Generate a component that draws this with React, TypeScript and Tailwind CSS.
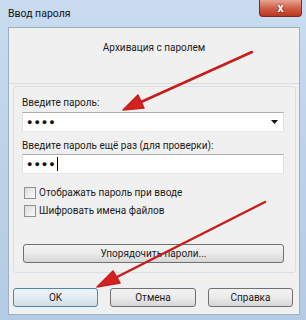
export default function App() {
  return (
    <div className="relative w-[306px] h-[320px] overflow-hidden flex flex-col bg-gradient-to-b from-[#c9dcef] via-[#bcd2ea] to-[#b4cbe5] font-['Roboto',sans-serif] text-[10px] leading-[16px] text-[#1b1b1b]">
      {/* Title bar */}
      <div className="h-[27px] flex items-start justify-between pl-[8px] pr-[4px] shrink-0">
        <span className="pt-[6px] text-[10.5px] text-[#111]">Ввод пароля</span>
        <div className="w-[43px] h-[17px] rounded-b-[4px] border border-t-0 border-[#7a2a20] bg-gradient-to-b from-[#e8a493] via-[#d0604a] to-[#b8371f] flex items-center justify-center">
          <span className="text-white font-bold text-[12px] leading-none [text-shadow:0_0_2px_#5a1208]">x</span>
        </div>
      </div>

      {/* Client area */}
      <div className="ml-[8px] mr-[6px] h-[288px] bg-[#f0f0f0] border border-[#9fb0c4] flex flex-col shrink-0">
        {/* Header */}
        <div className="h-[56px] pt-[12px] text-center border-b border-[#dcdcdc]">
          Архивация с паролем
        </div>

        {/* Group */}
        <div className="mt-[2px] ml-[4px] mr-[3px] h-[187px] border border-[#d5dfe5] rounded-[3px] pl-[8px] pr-[11px] pt-[8px] flex flex-col">
          <div>Введите пароль:</div>
          <div className="mt-[1px] h-[20px] bg-white border border-[#abadb3] border-l-[#e2e3ea] border-r-[#dbdfe6] border-b-[#e3e9ef] flex items-center justify-between pl-[4px] pr-[5px]">
            <span className="text-[9px] tracking-[2px] text-[#111]">●●●●</span>
            <svg width="7" height="4" viewBox="0 0 7 4">
              <path d="M0 0 H7 L3.5 4 Z" fill="#111" />
            </svg>
          </div>

          <div className="mt-[6px]">Введите пароль ещё раз (для проверки):</div>
          <div className="h-[20px] bg-white border border-[#abadb3] border-l-[#e2e3ea] border-r-[#dbdfe6] border-b-[#e3e9ef] flex items-center pl-[4px]">
            <span className="text-[9px] tracking-[2px] text-[#111]">●●●●</span>
            <span className="w-px h-[14px] bg-black" />
          </div>

          <label className="mt-[11px] h-[16px] flex items-center gap-[3px] ml-[2px]">
            <span className="w-[12px] h-[12px] border border-[#8e8f8f] bg-gradient-to-br from-[#dcdcdc] to-[#fbfbfb]" />
            <span>Отображать пароль при вводе</span>
          </label>
          <label className="mt-[2px] h-[16px] flex items-center gap-[3px] ml-[2px]">
            <span className="w-[12px] h-[12px] border border-[#8e8f8f] bg-gradient-to-br from-[#dcdcdc] to-[#fbfbfb]" />
            <span>Шифровать имена файлов</span>
          </label>

          <button className="mt-[25px] ml-[1px] h-[19px] rounded-[3px] border border-[#707070] bg-gradient-to-b from-[#f2f2f2] via-[#ebebeb] to-[#d6d6d6] flex items-center justify-center">
            Упорядочить пароли...
          </button>
        </div>

        {/* Buttons */}
        <div className="mt-[15px] pl-[4px] flex gap-[12px]">
          <button className="w-[85px] h-[19px] rounded-[3px] border border-[#4a86b4] bg-gradient-to-b from-[#eef4f8] via-[#e3ecf2] to-[#cfdce6] flex items-center justify-center">
            OK
          </button>
          <button className="w-[86px] h-[19px] rounded-[3px] border border-[#707070] bg-gradient-to-b from-[#f2f2f2] via-[#ebebeb] to-[#d6d6d6] flex items-center justify-center">
            Отмена
          </button>
          <button className="w-[85px] h-[19px] rounded-[3px] border border-[#707070] bg-gradient-to-b from-[#f2f2f2] via-[#ebebeb] to-[#d6d6d6] flex items-center justify-center">
            Справка
          </button>
        </div>
      </div>

      {/* Red annotation arrows */}
      <svg className="absolute inset-0 pointer-events-none" width="306" height="320" viewBox="0 0 306 320">
        <g stroke="#c81d1d" strokeWidth="2.5" strokeLinecap="round" fill="#d42222">
          <line x1="252" y1="52" x2="141" y2="102" />
          <polygon points="123,110 138,95 144,108" strokeWidth="1.5" strokeLinejoin="round" />
          <line x1="265" y1="202" x2="117" y2="277" />
          <polygon points="97,287 113,271 120,283" strokeWidth="1.5" strokeLinejoin="round" />
        </g>
      </svg>
    </div>
  );
}
